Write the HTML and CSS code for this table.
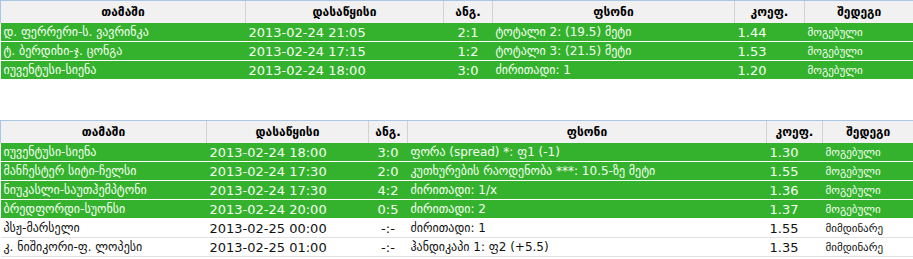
FILE: index.html
```html
<!DOCTYPE html>
<html lang="ka">
<head>
<meta charset="utf-8">
<title>ფსონები</title>
<link rel="stylesheet" href="styles.css">
</head>
<body>
<table class="bets bets-a">
  <colgroup>
    <col class="a1"><col class="a2"><col class="a3"><col class="a4"><col class="a5"><col class="a6">
  </colgroup>
  <thead>
    <tr><th>თამაში</th><th>დასაწყისი</th><th>ანგ.</th><th>ფსონი</th><th>კოეფ.</th><th>შედეგი</th></tr>
  </thead>
  <tbody>
    <tr class="won"><td class="game">დ. ფერრერი-ს. ვავრინკა</td><td class="date">2013-02-24 21:05</td><td class="score">2:1</td><td class="bet">ტოტალი 2: (19.5) მეტი</td><td class="odds">1.44</td><td class="res">მოგებული</td></tr>
    <tr class="won"><td class="game">ტ. ბერდიხი-ჯ. ცონგა</td><td class="date">2013-02-24 17:15</td><td class="score">1:2</td><td class="bet">ტოტალი 3: (21.5) მეტი</td><td class="odds">1.53</td><td class="res">მოგებული</td></tr>
    <tr class="won"><td class="game">იუვენტუსი-სიენა</td><td class="date">2013-02-24 18:00</td><td class="score">3:0</td><td class="bet">ძირითადი: 1</td><td class="odds">1.20</td><td class="res">მოგებული</td></tr>
  </tbody>
</table>

<table class="bets bets-b">
  <colgroup>
    <col class="b1"><col class="b2"><col class="b3"><col class="b4"><col class="b5"><col class="b6">
  </colgroup>
  <thead>
    <tr><th>თამაში</th><th>დასაწყისი</th><th>ანგ.</th><th>ფსონი</th><th>კოეფ.</th><th>შედეგი</th></tr>
  </thead>
  <tbody>
    <tr class="won"><td class="game">იუვენტუსი-სიენა</td><td class="date">2013-02-24 18:00</td><td class="score">3:0</td><td class="bet">ფორა (spread) *: ფ1 (-1)</td><td class="odds">1.30</td><td class="res">მოგებული</td></tr>
    <tr class="won"><td class="game">მანჩესტერ სიტი-ჩელსი</td><td class="date">2013-02-24 17:30</td><td class="score">2:0</td><td class="bet">კუთხურების რაოდენობა ***: 10.5-ზე მეტი</td><td class="odds">1.55</td><td class="res">მოგებული</td></tr>
    <tr class="won"><td class="game">ნიუკასლი-საუთჰემპტონი</td><td class="date">2013-02-24 17:30</td><td class="score">4:2</td><td class="bet">ძირითადი: 1/x</td><td class="odds">1.36</td><td class="res">მოგებული</td></tr>
    <tr class="won"><td class="game">ბრედფორდი-სუონსი</td><td class="date">2013-02-24 20:00</td><td class="score">0:5</td><td class="bet">ძირითადი: 2</td><td class="odds">1.37</td><td class="res">მოგებული</td></tr>
    <tr class="open"><td class="game">პსჟ-მარსელი</td><td class="date">2013-02-25 00:00</td><td class="score">-:-</td><td class="bet">ძირითადი: 1</td><td class="odds">1.55</td><td class="res">მიმდინარე</td></tr>
    <tr class="open"><td class="game">კ. ნიშიკორი-ფ. ლოპესი</td><td class="date">2013-02-25 01:00</td><td class="score">-:-</td><td class="bet">ჰანდიკაპი 1: ფ2 (+5.5)</td><td class="odds">1.35</td><td class="res">მიმდინარე</td></tr>
  </tbody>
</table>
</body>
</html>
```

FILE: styles.css
```css
html, body {
  margin: 0;
  padding: 0;
  background: #ffffff;
}

.bets {
  width: 913px;
  table-layout: fixed;
  border-collapse: collapse;
  border-spacing: 0;
  font-family: "DejaVu Sans", Verdana, sans-serif;
  font-size: 13px;
}

.bets-b {
  margin-top: 40px;
}

.a1 { width: 245px; }
.a2 { width: 198px; }
.a3 { width: 49px; }
.a4 { width: 242px; }
.a5 { width: 70px; }
.a6 { width: 109px; }

.b1 { width: 206px; }
.b2 { width: 162px; }
.b3 { width: 39px; }
.b4 { width: 359px; }
.b5 { width: 56px; }
.b6 { width: 91px; }

.bets th {
  height: 22px;
  padding: 0;
  border-top: 1px solid #a9c6e6;
  border-left: 1px solid #d2d2d2;
  background-color: #ececec;
  background-image:
    linear-gradient(45deg, rgba(255,255,255,0.55) 25%, transparent 25%, transparent 75%, rgba(255,255,255,0.55) 75%),
    linear-gradient(45deg, rgba(255,255,255,0.55) 25%, transparent 25%, transparent 75%, rgba(255,255,255,0.55) 75%);
  background-size: 2px 2px;
  background-position: 0 0, 1px 1px;
  color: #000;
  font-size: 12px;
  font-weight: bold;
  text-align: center;
  vertical-align: middle;
  white-space: nowrap;
}

.bets th:first-child {
  border-left: 1px solid #a9c6e6;
}

.bets td {
  height: 18px;
  padding: 0 3px;
  border-bottom: 1px solid #ffffff;
  vertical-align: middle;
  white-space: nowrap;
  overflow: hidden;
}

.won td {
  background: #35b22d;
  color: #f4fff2;
}

.open td {
  background: #ffffff;
  color: #111;
  border-bottom: 1px solid #e2e2e2;
}

.game {
  font-size: 12px;
}

.date {
  font-size: 13px;
}

.score {
  text-align: center;
}

.bet {
  font-size: 12px;
}

.odds {
  font-size: 13px;
}

.res {
  font-size: 11px;
}
```
